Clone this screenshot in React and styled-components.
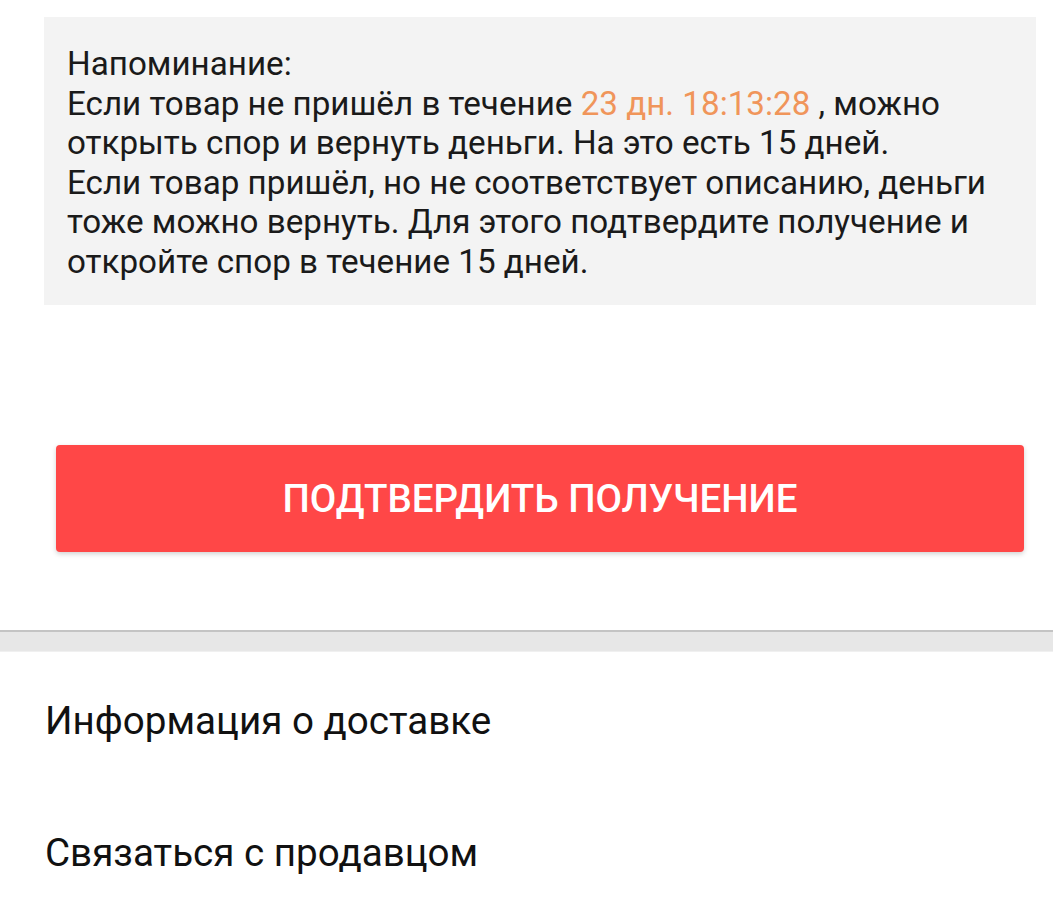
import React from 'react'
import styled, { createGlobalStyle } from 'styled-components'

const GlobalStyle = createGlobalStyle`
    body {
        margin: 0;
        background: #ffffff;
        font-family: Roboto, "Noto Sans", sans-serif;
        color: #111111;
    }
`

const Page = styled.div`
    width: 1053px;
    display: flex;
    flex-direction: column;
`

const Notice = styled.div`
    margin: 17px 17px 0 44px;
    height: 288px;
    box-sizing: border-box;
    padding: 27px 20px 0 23px;
    background: #f3f3f3;
    font-size: 33.2px;
    line-height: 39.5px;
    color: #1a1a1a;
    white-space: nowrap;
`

const Countdown = styled.span`
    color: #f0955a;
`

const ButtonArea = styled.div`
    padding: 140px 29px 0 56px;
`

const ConfirmButton = styled.button`
    width: 100%;
    height: 107px;
    border: none;
    border-radius: 4px;
    background: #ff4747;
    color: #ffffff;
    font-family: Roboto, "Noto Sans", sans-serif;
    font-size: 38.5px;
    font-weight: 500;
    box-shadow: 0 2px 5px rgba(0, 0, 0, 0.18);
    cursor: pointer;
`

const Divider = styled.div`
    margin-top: 78px;
    height: 19px;
    background: #e7e7e7;
    border-top: 2px solid #c4c4c4;
    border-bottom: 1px solid #f0f0f0;
`

const MenuList = styled.div`
    display: flex;
    flex-direction: column;
`

const MenuItem = styled.div`
    height: 128px;
    display: flex;
    align-items: center;
    padding-left: 45px;
    font-size: 38.6px;
    color: #111111;
`

const FirstItem = styled(MenuItem)`
    height: 136px;
`

const App = () => {
    return (
        <Page>
            <GlobalStyle />
            <Notice>
                Напоминание:<br />
                Если товар не пришёл в течение <Countdown>23 дн. 18:13:28</Countdown> , можно<br />
                открыть спор и вернуть деньги. На это есть 15 дней.<br />
                Если товар пришёл, но не соответствует описанию, деньги<br />
                тоже можно вернуть. Для этого подтвердите получение и<br />
                откройте спор в течение 15 дней.
            </Notice>
            <ButtonArea>
                <ConfirmButton>ПОДТВЕРДИТЬ ПОЛУЧЕНИЕ</ConfirmButton>
            </ButtonArea>
            <Divider />
            <MenuList>
                <FirstItem>Информация о доставке</FirstItem>
                <MenuItem>Связаться с продавцом</MenuItem>
            </MenuList>
        </Page>
    )
}

export default App
